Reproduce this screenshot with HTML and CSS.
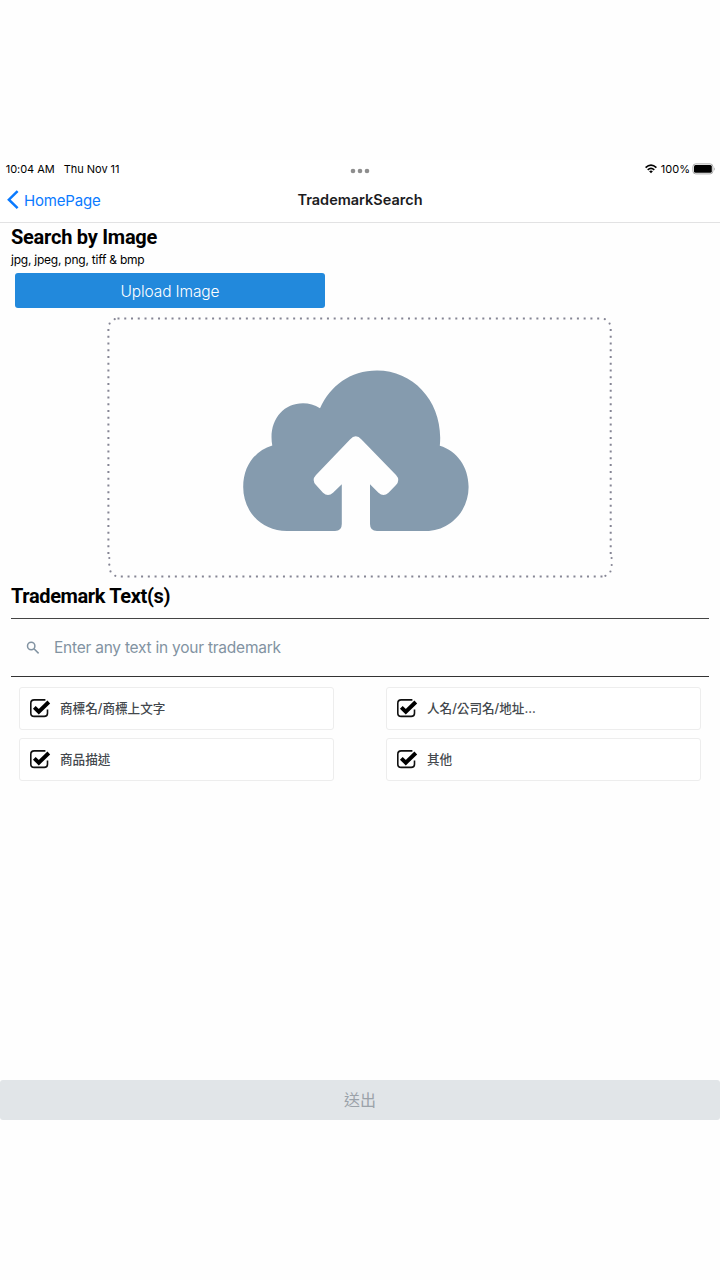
FILE: index.html
```html
<!DOCTYPE html>
<html lang="zh-Hant">
<head>
<meta charset="utf-8">
<title>TrademarkSearch</title>
<link rel="stylesheet" href="styles.css">
</head>
<body>
<div class="screen">
  <header>
    <div class="status">
      <div class="status-left"><span class="time">10:04 AM</span><span class="date">Thu Nov 11</span></div>
      <svg class="dots" width="20" height="6" viewBox="0 0 20 6" fill="#8e8e8e"><circle cx="3" cy="3" r="2.3"/><circle cx="10" cy="3" r="2.3"/><circle cx="17" cy="3" r="2.3"/></svg>
      <div class="status-right">
        <svg width="12" height="10" viewBox="0 0 12 10" fill="none" stroke="#000" stroke-width="1.6"><path d="M.6 3.7Q6-1.5 11.4 3.7"/><path d="M2.7 5.9Q6 2.9 9.3 5.9"/><path d="M4.1 7.3Q6 5.9 7.9 7.3L6 9.3Z" fill="#000" stroke="none"/></svg>
        <span class="percent">100%</span>
        <svg width="24" height="12" viewBox="0 0 24 12"><rect x=".9" y=".9" width="20" height="10" rx="2.8" fill="#fff" stroke="#aaa" stroke-width="1"/><rect x="2" y="2" width="17.8" height="7.8" rx="1.5"/><path d="M22 4.2q1.6 1.8 0 3.5z" fill="#999"/></svg>
      </div>
    </div>
    <nav class="nav">
      <div class="back"><svg width="13" height="20" viewBox="0 0 13 20" fill="none" stroke="#0a7aff" stroke-width="2.5"><path d="M10.6 1.2 1.9 9.7 10.6 18.2"/></svg><span>HomePage</span></div>
      <h1 class="title">TrademarkSearch</h1>
    </nav>
  </header>
  <main>
    <h2 class="heading">Search by Image</h2>
    <p class="formats">jpg, jpeg, png, tiff &amp; bmp</p>
    <button class="upload"><span>Upload Image</span></button>
    <div class="dropzone">
      <svg width="506" height="262" viewBox="107 316 506 262">
        <g fill="none" stroke="#858594" stroke-width="2" stroke-dasharray="2 4.756">
          <path d="M117.5 318.4H599.5"/><path d="M120.8 576.6H602.8"/>
          <path d="M108.4 329V554.2"/><path d="M610.7 329V554.2"/>
        </g>
        <g fill="#858594">
          <circle cx="114.7" cy="319.2" r="1.1"/><circle cx="109.6" cy="323.6" r="1.1"/><circle cx="604.8" cy="319.2" r="1.1"/><circle cx="609.6" cy="323.6" r="1.1"/>
          <circle cx="109.3" cy="558" r="1.1"/><circle cx="109.3" cy="564.7" r="1.1"/><circle cx="110.5" cy="571.4" r="1.1"/><circle cx="115.3" cy="575.8" r="1.1"/>
          <circle cx="611.6" cy="558" r="1.1"/><circle cx="611.7" cy="565" r="1.1"/><circle cx="610.4" cy="571.5" r="1.1"/><circle cx="605.4" cy="575.8" r="1.1"/>
        </g>
        <path fill="#859bae" d="M287 531C261 531 243.2 511 243.2 487C243.2 467 254 451 272.3 445.6C268 422 282 403.2 303 403.2Q312 403.2 320 408.3C330 386 350 370.5 377 370.5C415 370.5 444 404 439.8 445.8C457 451 468.6 467 468.6 487C468.6 511 450 531 426 531H377Q370 531 370 524V484.3L378.5 492.7Q383.5 497.4 388.5 492.7L396 485Q400.5 480 396 475L361.5 439.5Q355.8 433 350 439.5L316 475Q311.3 480 316 485L323 492.7Q328 497.4 333 492.7L341.8 484.3V524Q341.8 531 335 531Z"/>
      </svg>
    </div>
    <h2 class="heading heading-text">Trademark Text(s)</h2>
    <div class="search">
      <svg width="14" height="14" viewBox="0 0 14 14" fill="none" stroke="#8293a2" stroke-width="1.5"><circle cx="5.2" cy="5" r="3.7"/><path d="m8 7.8 4.6 4.6"/></svg>
      <span class="placeholder">Enter any text in your trademark</span>
    </div>
    <div class="options">
      <div class="option"><svg class="check" viewBox="0 0 22 20"><path d="M16.4 1.9H5.2Q1.8 1.9 1.8 5.2v10Q1.8 18.4 5.2 18.4h10q3.3 0 3.3-3.2v-3.7" fill="none" stroke="#111" stroke-width="1.6"/><path d="m5.3 9.3 4.5 4.4L19.8 4" fill="none" stroke="#000" stroke-width="3.9"/></svg><span>商標名/商標上文字</span></div>
      <div class="option"><svg class="check" viewBox="0 0 22 20"><path d="M16.4 1.9H5.2Q1.8 1.9 1.8 5.2v10Q1.8 18.4 5.2 18.4h10q3.3 0 3.3-3.2v-3.7" fill="none" stroke="#111" stroke-width="1.6"/><path d="m5.3 9.3 4.5 4.4L19.8 4" fill="none" stroke="#000" stroke-width="3.9"/></svg><span>人名/公司名/地址...</span></div>
      <div class="option"><svg class="check" viewBox="0 0 22 20"><path d="M16.4 1.9H5.2Q1.8 1.9 1.8 5.2v10Q1.8 18.4 5.2 18.4h10q3.3 0 3.3-3.2v-3.7" fill="none" stroke="#111" stroke-width="1.6"/><path d="m5.3 9.3 4.5 4.4L19.8 4" fill="none" stroke="#000" stroke-width="3.9"/></svg><span>商品描述</span></div>
      <div class="option"><svg class="check" viewBox="0 0 22 20"><path d="M16.4 1.9H5.2Q1.8 1.9 1.8 5.2v10Q1.8 18.4 5.2 18.4h10q3.3 0 3.3-3.2v-3.7" fill="none" stroke="#111" stroke-width="1.6"/><path d="m5.3 9.3 4.5 4.4L19.8 4" fill="none" stroke="#000" stroke-width="3.9"/></svg><span>其他</span></div>
    </div>
  </main>
  <button class="submit">送出</button>
</div>
</body>
</html>
```
FILE: styles.css
```css
* { box-sizing: border-box; }
body { margin: 0; background: #fefefe; color: #000; font-family: Inter, "Noto Sans CJK TC", sans-serif; }
h1, h2, p { margin: 0; }
button { border: 0; padding: 0; font-family: inherit; }
svg { display: block; flex: none; }
span { white-space: nowrap; }
.screen { width: 720px; height: 1280px; padding: 160px 0; display: flex; flex-direction: column; overflow: hidden; background: #fefefe; }
header { height: 63px; border-bottom: 1px solid #e2e2e3; background: #fff; }
.status { height: 18px; display: grid; grid-template-columns: 1fr auto 1fr; align-items: center; font-size: 11px; line-height: 18px; padding: 0 5px; }
.status-left { display: flex; gap: 9px; padding-left: 0.7px; }
.time, .date { letter-spacing: -0.03px; }
.dots { margin: 4px 0 0; }
.status-right { display: flex; justify-content: flex-end; align-items: center; margin-right: -1px; }
.percent { margin: 0 2px 0 4px; }
.nav { height: 44px; display: grid; grid-template-columns: 1fr auto 1fr; align-items: center; padding: 0 7px; }
.back { display: flex; align-items: center; gap: 4px; color: #0a7aff; font-size: 15px; letter-spacing: -0.18px; }
.title { font-size: 14.5px; font-weight: 600; line-height: 18px; padding-bottom: 1px; color: #1c1c1e; }
.heading { font: 700 20px/26px Roboto, sans-serif; letter-spacing: -0.25px; }
main { flex: 1; padding: 1px 11px 0; }
.formats { font-size: 12px; line-height: 18px; padding-top: 1px; letter-spacing: -0.23px; }
.upload { display: block; margin: 4px 0 0 4px; width: 310px; height: 35px; border-radius: 3px; background: #2289dc; color: #fff; font-size: 15.5px; line-height: 35px; padding-top: 1px; letter-spacing: -0.12px; font-weight: 300; }
.dropzone { display: flex; margin: 8px 0 0 96px; }
.heading-text { margin-top: 5px; letter-spacing: -0.38px; }
.search { margin-top: 9px; height: 59px; border-top: 1px solid #444; border-bottom: 1px solid #333; display: flex; align-items: center; gap: 14px; padding-left: 15px; color: #8293a2; font-size: 15.5px; }
.placeholder { letter-spacing: -0.24px; }
.options { display: grid; grid-template-columns: 315px 315px; column-gap: 52px; row-gap: 8px; padding: 10px 8px 0; }
.option { height: 43px; display: flex; align-items: center; gap: 9.4px; padding: 0 0 1px 8.6px; border: 1px solid #ededed; border-radius: 3px; background: #fff; color: #43484d; font: 500 12.6px/20px Inter, "Noto Sans CJK TC", sans-serif; }
.option span { padding-top: 2px; }
.check { width: 22px; height: 20px; }
.submit { height: 40px; border-radius: 3px; background: #e1e5e8; color: #9ba2a9; font-size: 16px; font-weight: 400; padding-bottom: 2px; }
```
